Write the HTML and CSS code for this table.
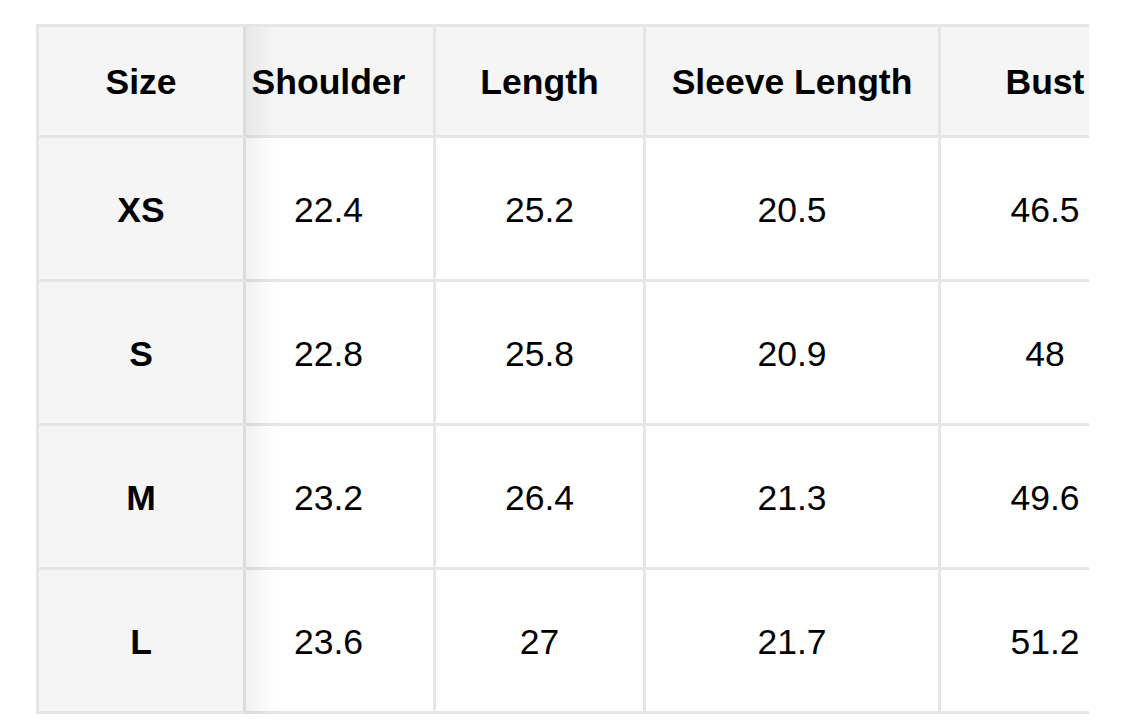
FILE: index.html
```html
<!DOCTYPE html>
<html>
<head>
<meta charset="utf-8">
<link rel="stylesheet" href="styles.css">
</head>
<body>
<div class="wrap">
  <table class="sizes">
    <colgroup>
      <col class="c-size"><col class="c-shoulder"><col class="c-length"><col class="c-sleeve"><col class="c-bust">
    </colgroup>
    <thead>
      <tr>
        <th class="first">Size</th>
        <th class="under">Shoulder</th>
        <th>Length</th>
        <th>Sleeve Length</th>
        <th>Bust</th>
      </tr>
    </thead>
    <tbody>
      <tr><th class="first">XS</th><td class="under">22.4</td><td>25.2</td><td>20.5</td><td>46.5</td></tr>
      <tr><th class="first">S</th><td class="under">22.8</td><td>25.8</td><td>20.9</td><td>48</td></tr>
      <tr><th class="first">M</th><td class="under">23.2</td><td>26.4</td><td>21.3</td><td>49.6</td></tr>
      <tr><th class="first">L</th><td class="under">23.6</td><td>27</td><td>21.7</td><td>51.2</td></tr>
    </tbody>
  </table>
</div>
</body>
</html>
```
FILE: styles.css
```css
html, body {
  margin: 0;
  padding: 0;
  background: #ffffff;
}
body {
  font-family: "Liberation Sans", Arial, Helvetica, sans-serif;
  color: #000;
}
.wrap {
  margin: 24px 0 0 36px;
  width: 1053px;
  overflow: hidden;
}
.sizes {
  border-collapse: separate;
  border-spacing: 0;
  table-layout: fixed;
  width: 1113px;
  border-top: 3px solid #e6e6e6;
  border-left: 3px solid #e6e6e6;
}
.c-size { width: 207px; }
.c-shoulder { width: 190px; }
.c-length { width: 210px; }
.c-sleeve { width: 295px; }
.c-bust { width: 211px; }
.sizes th, .sizes td {
  border-right: 3px solid #e6e6e6;
  border-bottom: 3px solid #e6e6e6;
  text-align: center;
  vertical-align: middle;
  font-size: 35.5px;
  padding: 0;
  box-sizing: border-box;
}
.sizes thead th {
  height: 111px;
  background: #f5f5f5;
  font-weight: bold;
  padding-top: 2px;
}
.sizes tbody td, .sizes tbody th {
  height: 144px;
  padding-top: 4px;
}
.sizes tbody td {
  font-weight: normal;
  background: #ffffff;
}
.sizes .under {
  padding-right: 22px;
}
.sizes th.first {
  position: relative;
  background: #f5f5f5;
  border-right-color: #dcdcdc;
  font-weight: bold;
}
.sizes th.first::after {
  content: "";
  position: absolute;
  top: 0;
  bottom: -3px;
  left: calc(100% + 3px);
  width: 30px;
  background: linear-gradient(to right, rgba(0,0,0,0.055), rgba(0,0,0,0));
  pointer-events: none;
}
```
